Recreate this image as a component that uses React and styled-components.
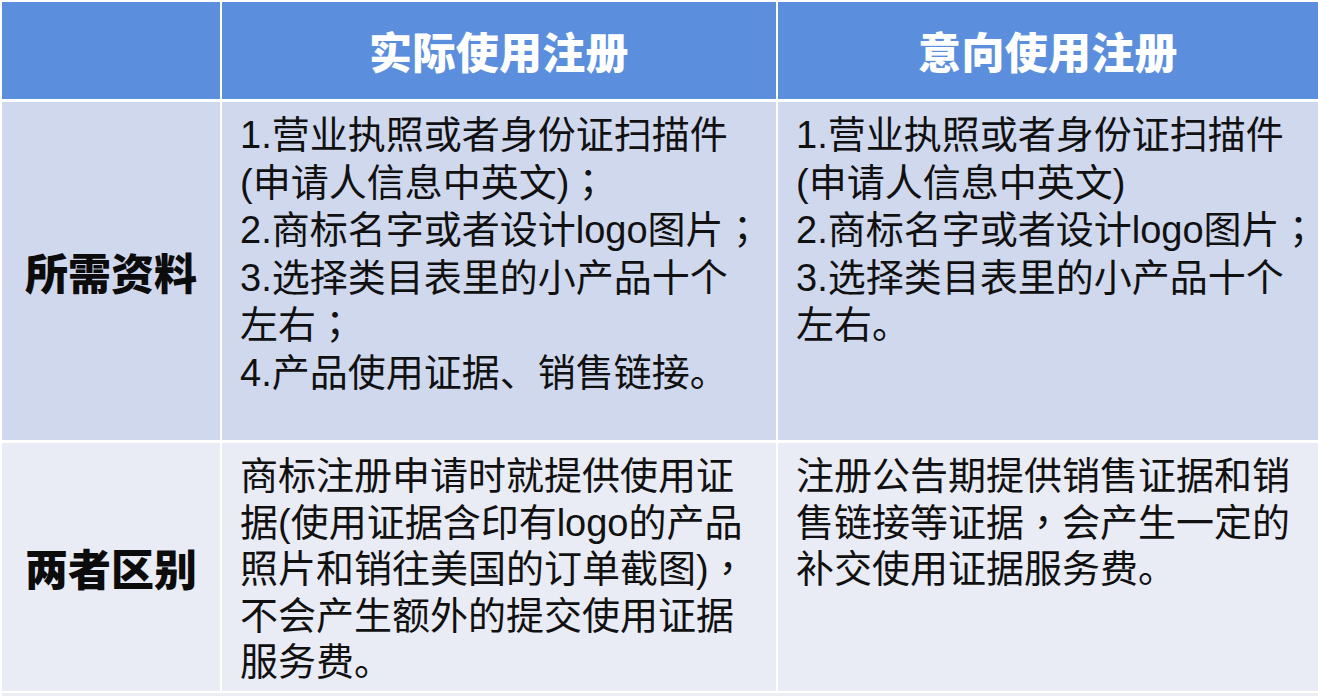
import React from "react";
import styled, { createGlobalStyle } from "styled-components";

const Global = createGlobalStyle`
  html, body { margin: 0; padding: 0; background: #ffffff; }
  body { font-family: "Liberation Sans", "Noto Sans CJK SC", sans-serif; }
`;

const Page = styled.div`
  width: 1318px;
  height: 696px;
  overflow: hidden;
  background: #ffffff;
  padding: 2px 0 0 2px;
  box-sizing: border-box;
  display: flex;
  flex-direction: column;
  gap: 2px;
`;

const Table = styled.div`
  display: grid;
  grid-template-columns: 218px 554px 1fr;
  grid-template-rows: 97px 338px 248px;
  column-gap: 2px;
  row-gap: 3px;
`;

const HeadCell = styled.div`
  background: #5b8fde;
  color: #ffffff;
  display: flex;
  align-items: center;
  justify-content: center;
  font-family: "Noto Sans CJK SC", sans-serif;
  font-weight: 900;
  font-size: 43px;
  letter-spacing: 0.3px;
  padding-bottom: 2px;
`;

const LabelCell = styled.div`
  background: ${(p) => p.$bg};
  display: flex;
  align-items: center;
  justify-content: center;
  font-family: "Noto Sans CJK SC", sans-serif;
  font-weight: 900;
  font-size: 43px;
  color: #0c0c0c;
`;

const BodyCell = styled.div`
  background: ${(p) => p.$bg};
  padding: ${(p) => p.$pt}px 10px 0 ${(p) => p.$pl}px;
  font-family: "Liberation Sans", "Noto Sans CJK SC", sans-serif;
  font-size: 38px;
  line-height: ${(p) => p.$lh}px;
  color: #111111;
  overflow: hidden;
`;

const Line = styled.div`
  white-space: nowrap;
`;

const Punc = styled.span`
  display: inline-block;
  font-family: "Noto Sans CJK TC", sans-serif;
  line-height: 38px;
  height: 38px;
`;

const BottomStrip = styled.div`
  flex: 1;
  background: #eceef4;
`;

const ROW2 = "#d0d8ee";
const ROW3 = "#e9ebf5";

const col2Req = [
  "1.营业执照或者身份证扫描件",
  "(申请人信息中英文)；",
  "2.商标名字或者设计logo图片；",
  "3.选择类目表里的小产品十个",
  "左右；",
  "4.产品使用证据、销售链接。",
];

const col3Req = [
  "1.营业执照或者身份证扫描件",
  "(申请人信息中英文)",
  "2.商标名字或者设计logo图片；",
  "3.选择类目表里的小产品十个",
  "左右。",
];

const col2Diff = [
  "商标注册申请时就提供使用证",
  "据(使用证据含印有logo的产品",
  "照片和销往美国的订单截图)，",
  "不会产生额外的提交使用证据",
  "服务费。",
];

const col3Diff = [
  "注册公告期提供销售证据和销",
  "售链接等证据，会产生一定的",
  "补交使用证据服务费。",
];

const renderText = (t) =>
  t.split(/([；，])/).map((part, i) =>
    part === "；" || part === "，" ? <Punc key={i}>{part}</Punc> : part
  );

const Lines = ({ items }) =>
  items.map((t, i) => <Line key={i}>{renderText(t)}</Line>);

export default function App() {
  return (
    <>
      <Global />
      <Page>
        <Table>
          <HeadCell />
          <HeadCell>实际使用注册</HeadCell>
          <HeadCell>意向使用注册</HeadCell>

          <LabelCell $bg={ROW2}>所需资料</LabelCell>
          <BodyCell $bg={ROW2} $pt={10} $pl={18} $lh={47.5}>
            <Lines items={col2Req} />
          </BodyCell>
          <BodyCell $bg={ROW2} $pt={10} $pl={18} $lh={47.5}>
            <Lines items={col3Req} />
          </BodyCell>

          <LabelCell $bg={ROW3}>两者区别</LabelCell>
          <BodyCell $bg={ROW3} $pt={10} $pl={18} $lh={46.5}>
            <Lines items={col2Diff} />
          </BodyCell>
          <BodyCell $bg={ROW3} $pt={10} $pl={18} $lh={46.5}>
            <Lines items={col3Diff} />
          </BodyCell>
        </Table>
        <BottomStrip />
      </Page>
    </>
  );
}
